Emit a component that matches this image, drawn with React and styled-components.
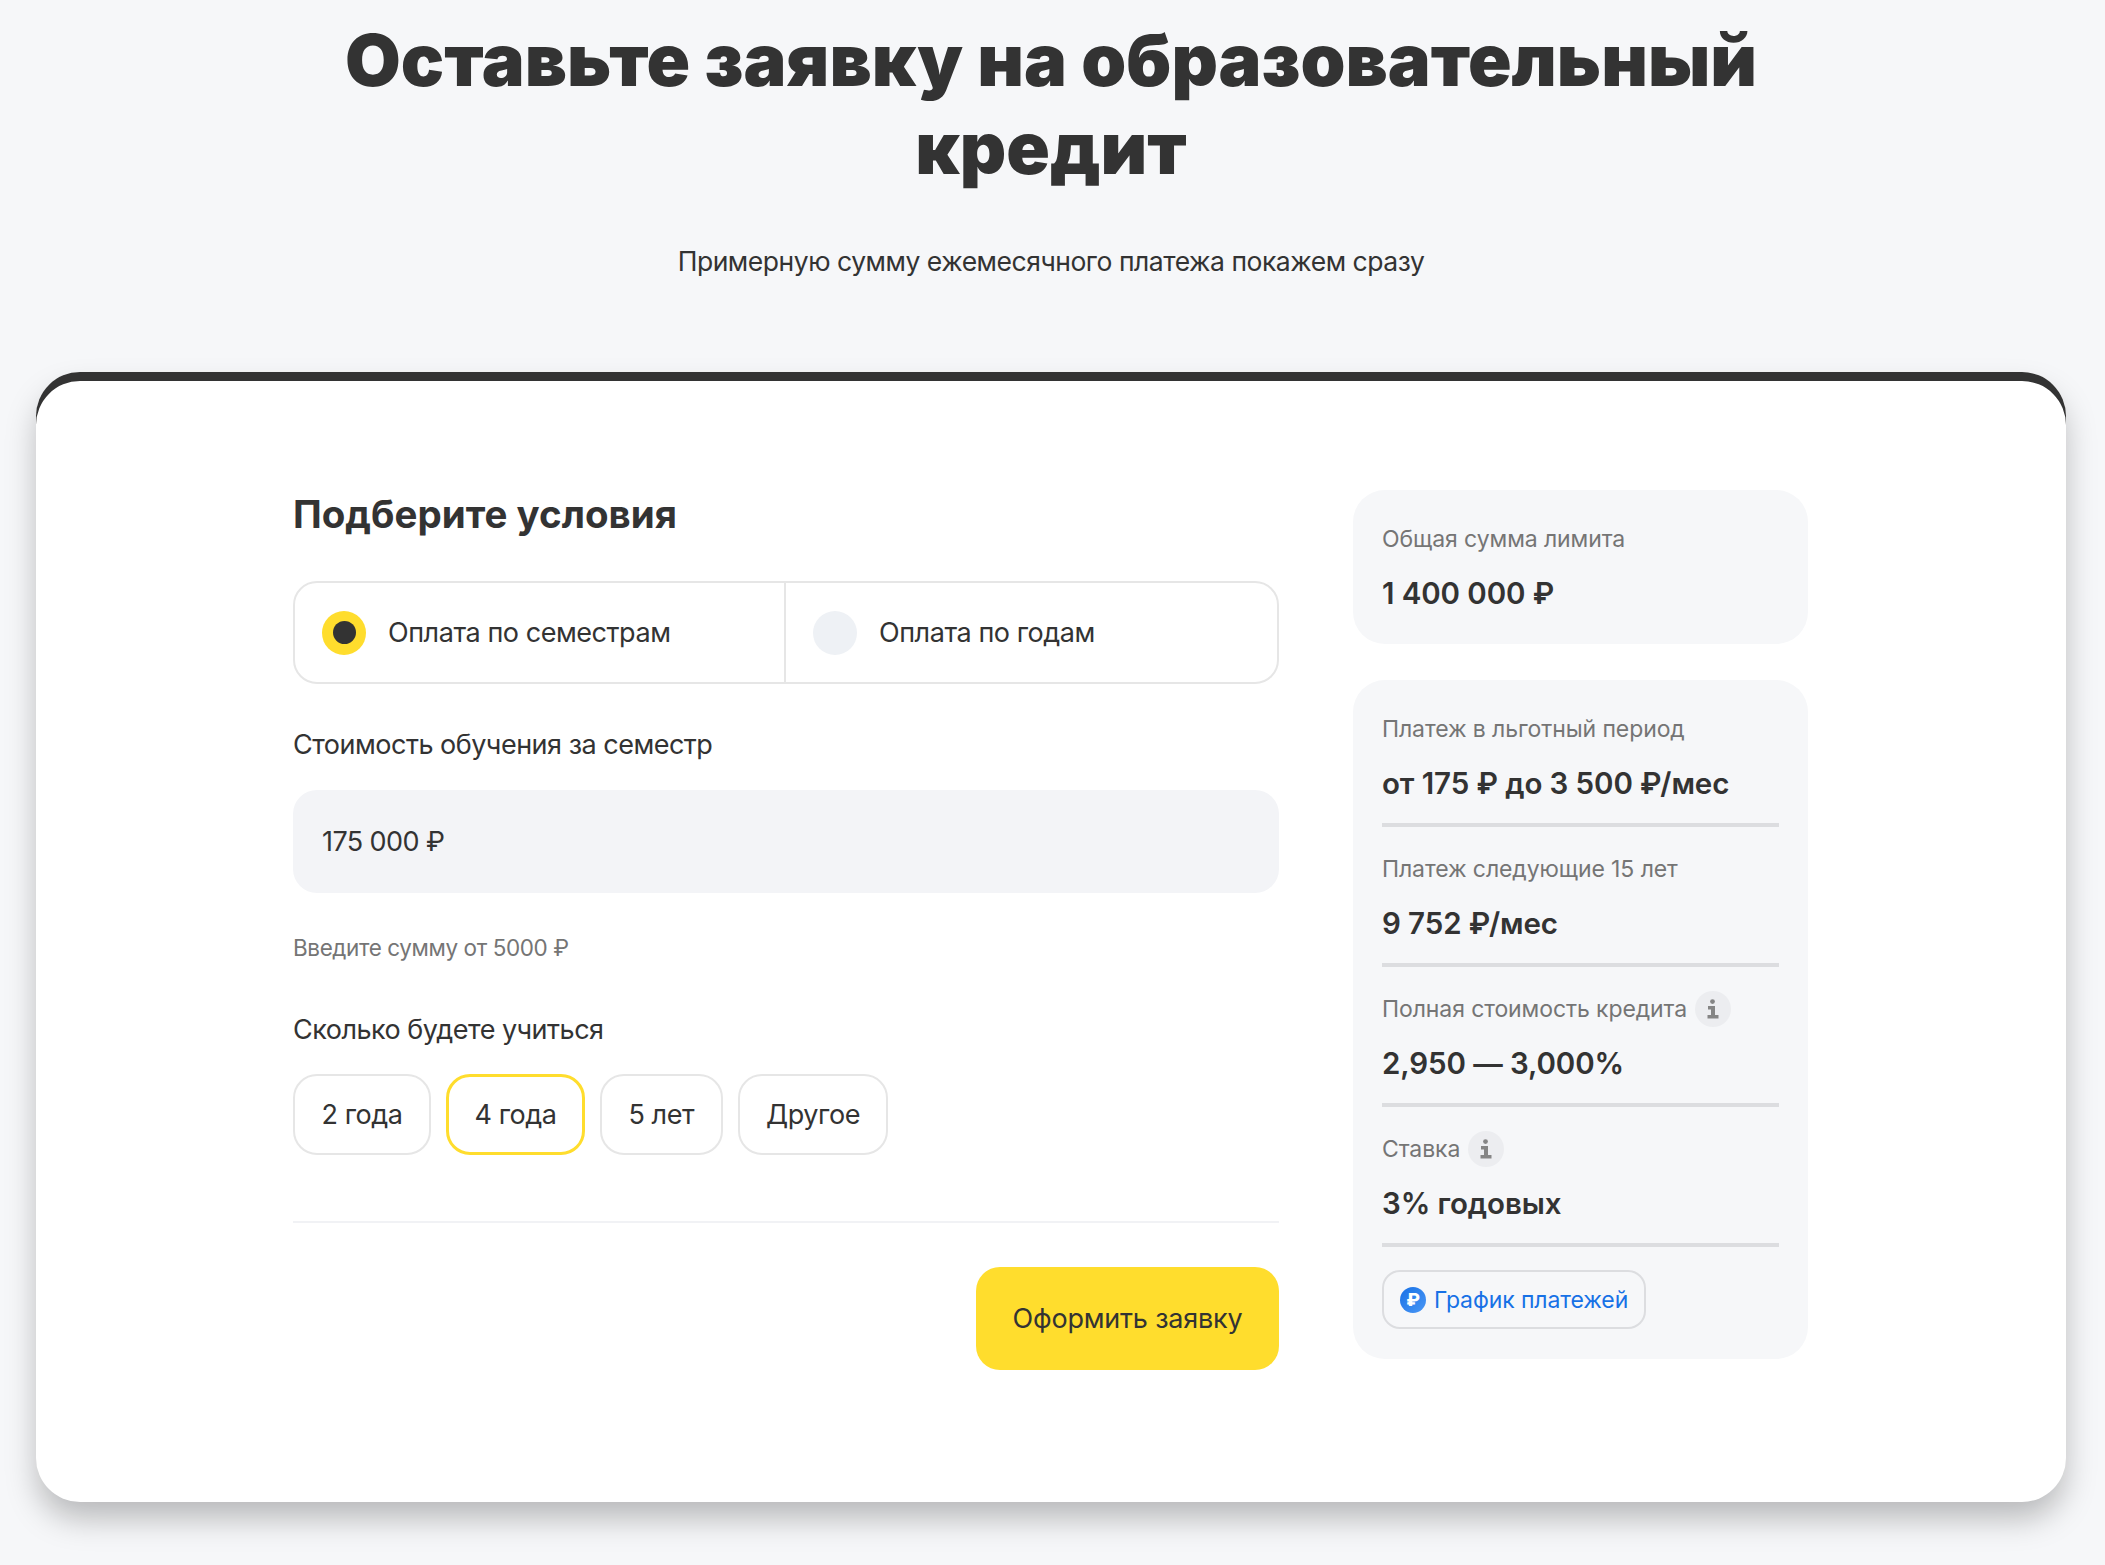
import React from "react";
import styled, { createGlobalStyle } from "styled-components";

const Global = createGlobalStyle`
  * { box-sizing: border-box; }
  html, body { margin: 0; padding: 0; background: #f6f7f9; }
  body { font-family: Inter, "Noto Sans", "Liberation Sans", sans-serif; color: #333; }
`;

const Page = styled.div`
  height: 1565px;
  padding: 0 39px 0 36px;
  overflow: hidden;
`;
const Hero = styled.header`
  display: flex;
  flex-direction: column;
  align-items: center;
  height: 372px;
  padding-top: 16px;
`;
const Title = styled.h1`
  width: 1600px;
  margin: 0;
  font-size: 72px;
  line-height: 88px;
  font-weight: 900;
  letter-spacing: 0;
  text-align: center;
  color: #333;
`;
const Subtitle = styled.p`
  margin: 51px 0 0;
  font-size: 26.5px;
  line-height: 36px;
  letter-spacing: -0.47px;
  color: #333;
`;
const Card = styled.main`
  height: 1130px;
  padding: 118px 0 0 257px;
  display: grid;
  grid-template-columns: 986px 455px;
  column-gap: 74px;
  align-items: start;
  background: #fff;
  border-radius: 44px;
  box-shadow: inset 0 9px 0 #333, 0 18px 32px -2px rgba(0, 0, 0, 0.26);
`;
const Form = styled.section`
  display: flex;
  flex-direction: column;
`;
const Heading = styled.h2`
  margin: 0;
  font-size: 38.5px;
  line-height: 49px;
  font-weight: 700;
  color: #333;
`;
const RadioGroup = styled.div`
  display: grid;
  grid-template-columns: 489px 1fr;
  height: 103px;
  margin-top: 42px;
  border: 2px solid #e6e6e6;
  border-radius: 24px;
`;
const RadioOption = styled.label`
  display: flex;
  align-items: center;
  gap: 22px;
  padding-left: 27px;
  font-size: 27px;
  letter-spacing: -0.45px;
  color: #333;
  & + & { border-left: 2px solid #e6e6e6; }
`;
const RadioMark = styled.span`
  width: 44px;
  height: 44px;
  border-radius: 50%;
  flex: none;
  display: flex;
  align-items: center;
  justify-content: center;
  background: ${(p) => (p.$on ? "#ffdd2d" : "#eef1f5")};
  &::after {
    content: "";
    width: 23px;
    height: 23px;
    border-radius: 50%;
    background: ${(p) => (p.$on ? "#333" : "transparent")};
  }
`;
const FieldLabel = styled.div`
  margin-top: ${(p) => p.$top}px;
  font-size: 27px;
  letter-spacing: -0.5px;
  line-height: 36px;
  color: #333;
`;
const AmountInput = styled.div`
  display: flex;
  align-items: center;
  height: 103px;
  margin-top: 27px;
  padding-left: 29px;
  background: #f3f4f7;
  border-radius: 24px;
  font-size: 27px;
  letter-spacing: -0.6px;
  color: #333;
`;
const Hint = styled.div`
  margin-top: 39px;
  font-size: 22.5px;
  letter-spacing: -0.4px;
  line-height: 32px;
  color: #757575;
`;
const Chips = styled.div`
  display: flex;
  gap: 15px;
  margin-top: 26px;
`;
const Chip = styled.button`
  height: 81px;
  padding: 0 ${(p) => (p.$on ? 25.5 : 26.5)}px;
  background: #fff;
  border: ${(p) => (p.$on ? "3px solid #ffdd2d" : "2px solid #e6e6e6")};
  border-radius: 24px;
  font: inherit;
  font-size: 27px;
  letter-spacing: -0.45px;
  color: #333;
`;
const Rule = styled.hr`
  width: 100%;
  height: 2px;
  margin: 66px 0 0;
  border: 0;
  background: #f1f2f5;
`;
const Actions = styled.div`
  display: flex;
  justify-content: flex-end;
  margin-top: 44px;
`;
const Submit = styled.button`
  width: 303px;
  height: 103px;
  background: #ffdd2d;
  border: 0;
  border-radius: 24px;
  font: inherit;
  font-size: 27px;
  letter-spacing: -0.2px;
  color: #333;
`;
const Side = styled.aside`
  display: flex;
  flex-direction: column;
  gap: 36px;
`;
const Panel = styled.div`
  padding: 30px 29px ${(p) => p.$bottom}px;
  background: #f6f7f9;
  border-radius: 32px;
`;
const Stat = styled.div`
  height: 117px;
  border-bottom: 4px solid #dcdde0;
  & + & { margin-top: 23px; }
`;
const StatLabel = styled.div`
  display: flex;
  align-items: center;
  gap: 8px;
  height: 38px;
  font-size: 23px;
  letter-spacing: -0.1px;
  color: #757575;
`;
const StatValue = styled.div`
  margin-top: 17px;
  font-size: 29.5px;
  letter-spacing: -0.1px;
  line-height: 36px;
  font-weight: 600;
  color: #333;
`;
const InfoBadge = styled.span`
  width: 36px;
  height: 36px;
  flex: none;
  display: flex;
  align-items: center;
  justify-content: center;
  border-radius: 50%;
  background: #ecedf0;
`;
const ScheduleButton = styled.button`
  display: inline-flex;
  align-items: center;
  gap: 8px;
  height: 59px;
  margin-top: 23px;
  padding: 0 16px;
  background: transparent;
  border: 2px solid #dcdde0;
  border-radius: 18px;
  font: inherit;
  font-size: 23px;
  letter-spacing: -0.1px;
  color: #1771e6;
`;
const RubleIcon = styled.span`
  width: 26px;
  height: 26px;
  flex: none;
  display: flex;
  align-items: center;
  justify-content: center;
  border-radius: 50%;
  background: linear-gradient(135deg, #1771e6, #4b97f5);
  color: #fff;
  font-size: 18px;
  line-height: 1;
  font-weight: 800;
`;

const InfoIcon = () => (
  <InfoBadge>
    <svg width="14" height="20" viewBox="0 0 14 20" fill="#858585">
      <circle cx="6.5" cy="2.6" r="2.4" />
      <path d="M2 7h7v9h3.5v3.5H1.5V16H5v-5.5H2z" />
    </svg>
  </InfoBadge>
);

const stats = [
  { label: "Платеж в льготный период", value: "от 175 ₽ до 3 500 ₽/мес" },
  { label: "Платеж следующие 15 лет", value: "9 752 ₽/мес" },
  { label: "Полная стоимость кредита", value: "2,950 — 3,000%", info: true },
  { label: "Ставка", value: "3% годовых", info: true },
];

export default function App() {
  return (
    <Page>
      <Global />
      <Hero>
        <Title>Оставьте заявку на образовательный кредит</Title>
        <Subtitle>Примерную сумму ежемесячного платежа покажем сразу</Subtitle>
      </Hero>
      <Card>
        <Form>
          <Heading>Подберите условия</Heading>
          <RadioGroup>
            <RadioOption><RadioMark $on />Оплата по семестрам</RadioOption>
            <RadioOption><RadioMark />Оплата по годам</RadioOption>
          </RadioGroup>
          <FieldLabel $top={43}>Стоимость обучения за семестр</FieldLabel>
          <AmountInput>175 000 ₽</AmountInput>
          <Hint>Введите сумму от 5000 ₽</Hint>
          <FieldLabel $top={48}>Сколько будете учиться</FieldLabel>
          <Chips>
            <Chip>2 года</Chip>
            <Chip $on>4 года</Chip>
            <Chip>5 лет</Chip>
            <Chip>Другое</Chip>
          </Chips>
          <Rule />
          <Actions><Submit>Оформить заявку</Submit></Actions>
        </Form>
        <Side>
          <Panel $bottom={33}>
            <StatLabel>Общая сумма лимита</StatLabel>
            <StatValue>1 400 000 ₽</StatValue>
          </Panel>
          <Panel $bottom={30}>
            {stats.map((s) => (
              <Stat key={s.label}>
                <StatLabel>{s.label}{s.info && <InfoIcon />}</StatLabel>
                <StatValue>{s.value}</StatValue>
              </Stat>
            ))}
            <ScheduleButton><RubleIcon>₽</RubleIcon>График платежей</ScheduleButton>
          </Panel>
        </Side>
      </Card>
    </Page>
  );
}
